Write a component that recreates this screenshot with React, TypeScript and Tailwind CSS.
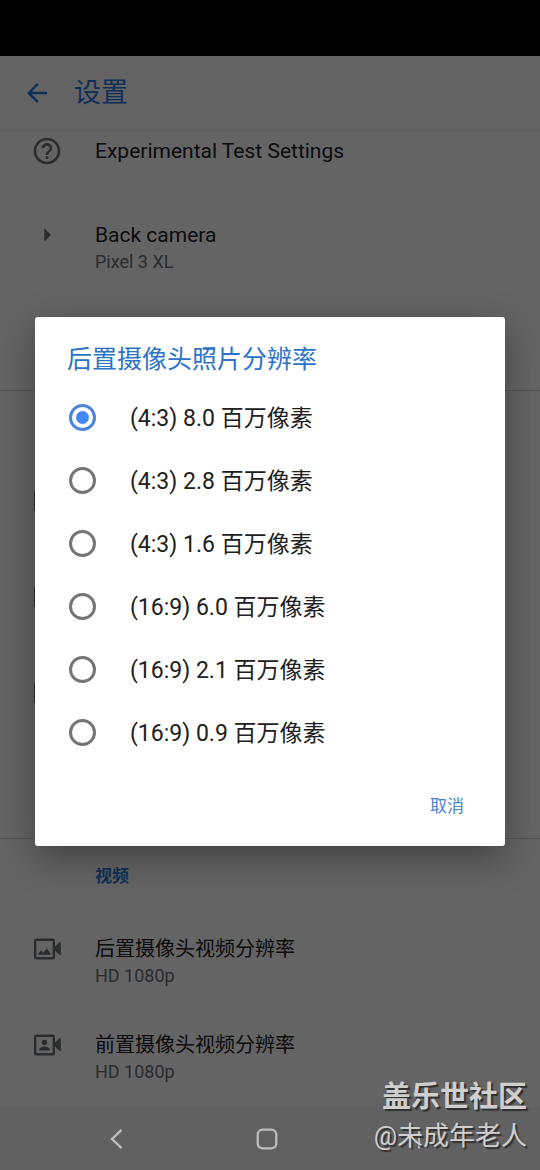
import { useState } from "react";
import type { ReactNode } from "react";
import { MdArrowBack, MdArrowRight, MdHelpOutline } from "react-icons/md";

const resolutions = [
  "(4:3) 8.0 百万像素",
  "(4:3) 2.8 百万像素",
  "(4:3) 1.6 百万像素",
  "(16:9) 6.0 百万像素",
  "(16:9) 2.1 百万像素",
  "(16:9) 0.9 百万像素",
];

function Camcorder({ children }: { children?: ReactNode }) {
  return (
    <svg width="28" height="22" viewBox="-0.5 0 28 22" fill="currentColor">
      <path
        fillRule="evenodd"
        d="M2.5 0.5h17a2 2 0 0 1 2 2v6l5.8-5.2v14.4l-5.8-5.2v7a2 2 0 0 1-2 2h-17a2 2 0 0 1-2-2v-17a2 2 0 0 1 2-2zM2.9 2.9v16.2h16.2V2.9z"
      />
      {children}
    </svg>
  );
}

function BackVideoIcon() {
  return (
    <Camcorder>
      <path d="M4.2 16.8l3.4-4.7 2.2 2.8 3.4-4.6 4.6 6.5z" />
    </Camcorder>
  );
}

function FrontVideoIcon() {
  return (
    <Camcorder>
      <circle cx="11" cy="8.4" r="2.7" />
      <path d="M5.8 16.4v-.9c0-1.9 3.1-3 5.2-3s5.2 1.1 5.2 3v.9z" />
    </Camcorder>
  );
}

type RowProps = {
  icon?: ReactNode;
  title?: string;
  summary?: string;
  className?: string;
};

function Row({
  icon,
  title,
  summary,
  className = "h-24 text-[20px]",
}: RowProps) {
  return (
    <li className={`flex items-start gap-8 pt-[33px] pl-[31px] ${className}`}>
      <span className="flex h-7 w-8 shrink-0 items-center justify-center text-[#6a6e73]">
        {icon}
      </span>
      <div>
        <p className="leading-7 text-[#202124]">{title}</p>
        <p className="text-[18px] leading-[26px] text-[#6a6e73]">{summary}</p>
      </div>
    </li>
  );
}

function ResolutionDialog() {
  const [selected, setSelected] = useState(resolutions[0]);

  return (
    <div className="absolute inset-0 z-20 flex items-center justify-center bg-black/60 px-[35px]">
      <div
        role="dialog"
        aria-labelledby="dialog-title"
        className="w-full rounded-[3px] bg-white shadow-[0_12px_36px_rgba(0,0,0,0.35)]"
      >
        <h2
          id="dialog-title"
          className="px-8 pt-6 pb-[7px] text-[25px] leading-[38px] text-[#2b73c8]"
        >
          后置摄像头照片分辨率
        </h2>
        <div>
          {resolutions.map((item) => (
            <label
              key={item}
              className="flex h-[63px] items-center gap-[34px] pl-[34px] text-[23px] text-[#202020]"
            >
              <input
                type="radio"
                name="resolution"
                checked={selected === item}
                onChange={() => setSelected(item)}
                className="flex size-[27px] appearance-none items-center justify-center rounded-full border-3 border-[#757575] checked:border-[#4a84dc] checked:before:size-[13px] checked:before:rounded-full checked:before:bg-[#4285f4]"
              />
              <span className="pt-1">{item}</span>
            </label>
          ))}
        </div>
        <div className="flex justify-end px-[29px] pt-[23px] pb-[19px]">
          <button type="button" className="h-10 px-3 text-[17px] text-[#4583cf]">
            取消
          </button>
        </div>
      </div>
    </div>
  );
}

function NavBar() {
  return (
    <nav className="grid h-[63px] grid-cols-3 place-items-center bg-[#616161] pr-12 pl-[42px] text-[#bdbdbd]">
      <button type="button" aria-label="Back">
        <svg width="24" height="24" viewBox="0 0 24 24" fill="none" stroke="currentColor" strokeWidth="2.4">
          <path d="M16.5 2.8L7.1 12l9.4 9.2" />
        </svg>
      </button>
      <button type="button" aria-label="Home">
        <svg width="24" height="24" viewBox="0 0 24 24" fill="none" stroke="currentColor" strokeWidth="2.3">
          <rect x="2.7" y="2.7" width="18.6" height="18.6" rx="5" />
        </svg>
      </button>
      <button type="button" aria-label="Recents">
        <svg width="24" height="24" viewBox="0 0 24 24" fill="none" stroke="currentColor" strokeWidth="2.2">
          <path d="M5.8 2.5v19M14 2.5v19M22.2 2.5v19" />
        </svg>
      </button>
    </nav>
  );
}

export default function App() {
  return (
    <div className="relative flex min-h-screen flex-col bg-[#fafafa] font-[Roboto,'Noto_Sans_CJK_SC',sans-serif]">
      <div className="h-14 bg-black" />
      <main className="relative flex-1 overflow-hidden">
        <header className="relative z-10 flex h-[76px] items-center gap-[22px] border-b-2 border-[#ececec] bg-[#f7f7f7] pl-[22px] text-[#2a76dc]">
          <button type="button" aria-label="Back">
            <MdArrowBack size={30} />
          </button>
          <h1 className="text-[27px]">设置</h1>
        </header>

        <ul className="-mt-7">
          <Row
            icon={<MdHelpOutline size={32} />}
            title="Experimental Test Settings"
            className="h-[84px] text-[21px]"
          />
          <Row
            icon={<MdArrowRight size={32} />}
            title="Back camera"
            summary="Pixel 3 XL"
            className="h-24 text-[21px]"
          />
          <Row icon={<MdArrowRight size={32} />} className="h-[106px]" />
        </ul>

        <section className="border-t border-[#d4d4d4]">
          <div className="h-[63px]" />
          <ul>
            <Row icon={<BackVideoIcon />} />
            <Row icon={<FrontVideoIcon />} />
            <Row icon={<BackVideoIcon />} />
            <Row />
          </ul>
        </section>

        <section className="border-t border-[#d4d4d4]">
          <h2 className="h-[63px] pt-6 pl-[95px] text-[17px] leading-[26px] font-bold text-[#2a76dc]">
            视频
          </h2>
          <ul>
            <Row
              icon={<BackVideoIcon />}
              title="后置摄像头视频分辨率"
              summary="HD 1080p"
            />
            <Row
              icon={<FrontVideoIcon />}
              title="前置摄像头视频分辨率"
              summary="HD 1080p"
            />
          </ul>
        </section>

        <ResolutionDialog />
      </main>
      <NavBar />

      <div className="pointer-events-none absolute right-[13px] bottom-[15px] z-30 text-right text-[#cfcfcf] text-shadow-[2px_2px_1px_#303030]">
        <p className="text-[29px] leading-10 font-bold">盖乐世社区</p>
        <p className="text-[26px] leading-[38px]">@未成年老人</p>
      </div>
    </div>
  );
}
